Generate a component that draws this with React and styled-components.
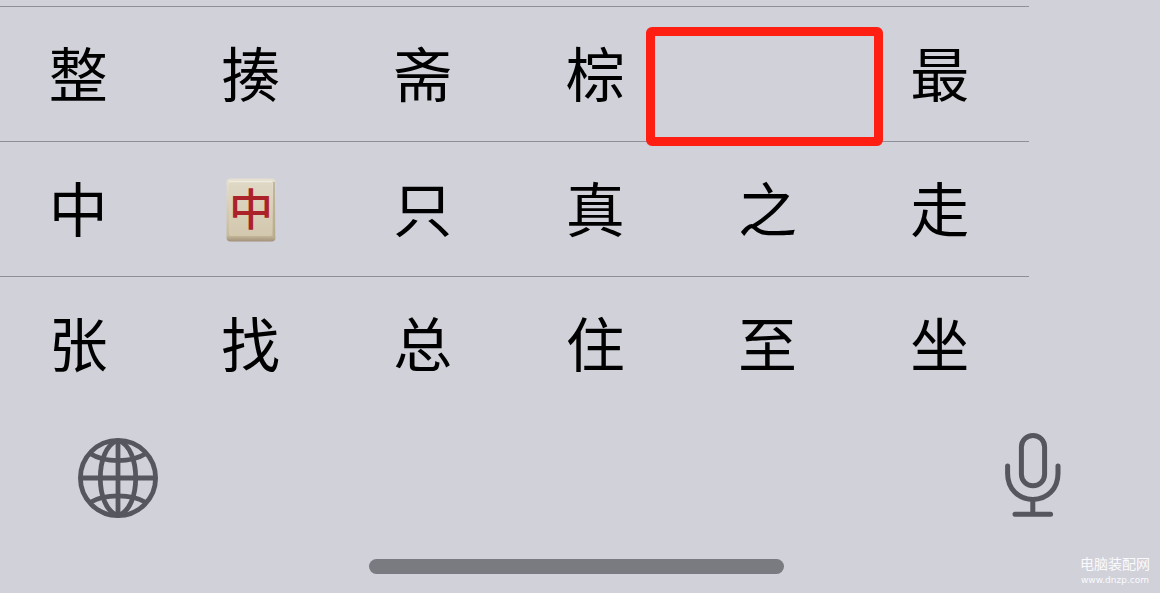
import styled, { createGlobalStyle } from "styled-components";

const rows = [
  ["整", "揍", "斋", "棕", "", "最"],
  ["中", "🀄", "只", "真", "之", "走"],
  ["张", "找", "总", "住", "至", "坐"],
];

const MahjongTile = () => (
  <Tile width="50" height="64" viewBox="0 0 50 64" aria-hidden="true">
    <defs>
      <linearGradient id="edge" x1="0" y1="0" x2="0" y2="1">
        <stop offset="0" stopColor="#e6e0d0" />
        <stop offset="0.9" stopColor="#c8bb9c" />
        <stop offset="1" stopColor="#a1917a" />
      </linearGradient>
      <linearGradient id="face" x1="0" y1="0" x2="0" y2="1">
        <stop offset="0" stopColor="#dfd8c5" />
        <stop offset="1" stopColor="#d3c8ae" />
      </linearGradient>
    </defs>
    <rect x="0.5" y="0.5" width="49" height="63" rx="4" fill="url(#edge)" />
    <rect x="3" y="4" width="43" height="54" rx="2" fill="url(#face)" />
    <path d="M3 3.5H46" stroke="#efebdf" strokeWidth="1.5" />
    <path d="M48 4V59" stroke="#b5a88e" strokeWidth="1.5" />
    <text x="25" y="48" textAnchor="middle">
      中
    </text>
  </Tile>
);

const GlobeIcon = () => (
  <svg
    width="80"
    height="80"
    viewBox="0 0 80 80"
    fill="none"
    stroke="#56575e"
    strokeWidth="4.8"
    aria-hidden="true"
  >
    <circle cx="40" cy="40" r="37.6" />
    <path d="M40 2.5V77.5M2.5 40H77.5" />
    <path d="M40 2.5C28 6 22.3 23 22.3 40S28 74 40 77.5" />
    <path d="M40 2.5C52 6 57.7 23 57.7 40S52 74 40 77.5" />
    <path d="M12 15.5C20 20.5 30 22.6 40 22.6S60 20.5 68 15.5" />
    <path d="M12 64.5C20 59.5 30 57.8 40 57.8S60 59.5 68 64.5" />
  </svg>
);

const MicIcon = () => (
  <svg
    width="56"
    height="86"
    viewBox="0 0 56 86"
    fill="none"
    stroke="#56575e"
    strokeWidth="5"
    strokeLinecap="round"
    aria-hidden="true"
  >
    <rect x="16.4" y="3.4" width="23.2" height="50.4" rx="11.6" />
    <path d="M2.6 34V41.5C2.6 56.5 13 67.4 27.8 67.4S53 56.5 53 41.5V34" />
    <path d="M27.8 67.4V82M10 82.3H45.6" />
  </svg>
);

const App = () => {
  return (
    <Keyboard>
      <GlobalStyle />
      <Candidates>
        {rows.map((row, rowIndex) => (
          <Row key={rowIndex}>
            {row.map((char, index) => (
              <Key
                key={index}
                type="button"
                aria-label={char === "" ? "空白" : undefined}
              >
                {char === "🀄" ? <MahjongTile /> : char}
                {char === "" && <Highlight />}
              </Key>
            ))}
          </Row>
        ))}
      </Candidates>
      <Toolbar>
        <IconButton type="button" aria-label="切换键盘">
          <GlobeIcon />
        </IconButton>
        <IconButton type="button" aria-label="听写">
          <MicIcon />
        </IconButton>
      </Toolbar>
      <Footer>
        <HomeBar />
      </Footer>
      <Watermark>
        <SiteName>电脑装配网</SiteName>
        <SiteUrl>www.dnzp.com</SiteUrl>
      </Watermark>
    </Keyboard>
  );
};

const GlobalStyle = createGlobalStyle`
  * {
    box-sizing: border-box;
  }

  body {
    margin: 0;
    background: #d1d1da;
    font-family: "Noto Sans CJK SC", sans-serif;
  }
`;

const Keyboard = styled.main`
  position: relative;
  min-height: 100vh;
  padding-top: 6px;
  overflow: hidden;
`;

const Candidates = styled.section`
  margin-right: 131px;
`;

const Row = styled.div`
  display: grid;
  grid-template-columns: repeat(6, 1fr);
  column-gap: 16px;
  padding-right: 11px;
  border-top: 1px solid #8f8f98;
`;

const Key = styled.button`
  position: relative;
  display: flex;
  align-items: center;
  justify-content: center;
  height: 134px;
  padding: 0 0 4px;
  border: none;
  background: none;
  color: #000;
  font-family: inherit;
  font-size: 59px;
  line-height: 64px;
`;

const Tile = styled.svg`
  margin: 6px 0 0 2px;
  overflow: visible;

  text {
    fill: #ac2229;
    font-size: 44px;
    font-weight: 500;
    line-height: 44px;
  }
`;

const Highlight = styled.span`
  position: absolute;
  z-index: 1;
  top: 20px;
  bottom: -5px;
  left: -43px;
  right: -37px;
  border: 9px solid #ff1e12;
  border-radius: 6px;
`;

const Toolbar = styled.div`
  display: flex;
  align-items: flex-end;
  justify-content: space-between;
  margin-top: 21px;
  padding: 0 99px 0 78px;
`;

const IconButton = styled.button`
  display: flex;
  padding: 0;
  border: none;
  background: none;
`;

const Footer = styled.footer`
  display: flex;
  justify-content: center;
  margin-top: 41px;
  padding-right: 7px;
`;

const HomeBar = styled.div`
  width: 36%;
  height: 15px;
  border-radius: 8px;
  background: #7a7a81;
`;

const Watermark = styled.div`
  position: absolute;
  right: 10px;
  bottom: 7px;
  color: #fafafc;
  text-align: center;
`;

const SiteName = styled.div`
  margin-bottom: 3px;
  font-size: 14px;
  line-height: 16px;
`;

const SiteUrl = styled.div`
  font-family: "DejaVu Sans", sans-serif;
  font-size: 9px;
  line-height: 12px;
`;

export default App;
